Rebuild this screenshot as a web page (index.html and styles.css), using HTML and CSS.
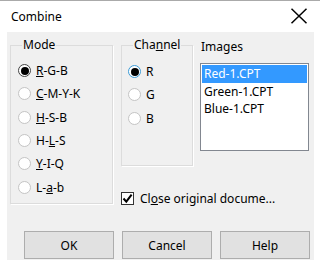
FILE: index.html
```html
<!DOCTYPE html>
<html lang="en">
<head>
    <meta charset="UTF-8">
    <title>Combine</title>
    <link rel="stylesheet" href="styles.css">
</head>
<body>
    <div class="window">
        <div class="titlebar">
            <span class="title">Combine</span>
            <svg class="close" width="18" height="16" viewBox="0 0 18 16">
                <path d="M1.5 0.8 L16.5 15.2 M16.5 0.8 L1.5 15.2" stroke="#000" stroke-width="1.5" fill="none"/>
            </svg>
        </div>
        <div class="client">
            <div class="top">
                <fieldset class="group mode">
                    <legend>Mode</legend>
                    <label class="option"><span class="radio checked"></span><span><u>R</u>-G-B</span></label>
                    <label class="option"><span class="radio"></span><span><u>C</u>-M-Y-K</span></label>
                    <label class="option"><span class="radio"></span><span><u>H</u>-S-B</span></label>
                    <label class="option"><span class="radio"></span><span>H-<u>L</u>-S</span></label>
                    <label class="option"><span class="radio"></span><span><u>Y</u>-I-Q</span></label>
                    <label class="option"><span class="radio"></span><span>L-<u>a</u>-b</span></label>
                </fieldset>
                <div class="middle">
                    <fieldset class="group channel">
                        <legend>Cha<u>n</u>nel</legend>
                        <label class="option"><span class="radio checked focus"></span><span>R</span></label>
                        <label class="option"><span class="radio"></span><span>G</span></label>
                        <label class="option"><span class="radio"></span><span>B</span></label>
                    </fieldset>
                    <label class="check">
                        <span class="box">
                            <svg width="11" height="11" viewBox="0 0 11 11">
                                <path d="M1.5 5.5 L4.3 8.6 L9.6 1.6" stroke="#000" stroke-width="2" fill="none"/>
                            </svg>
                        </span>
                        <span>Cl<u>o</u>se original docume...</span>
                    </label>
                </div>
                <div class="images">
                    <div class="images-label">Images</div>
                    <div class="listbox">
                        <div class="item selected">Red-1.CPT</div>
                        <div class="item">Green-1.CPT</div>
                        <div class="item">Blue-1.CPT</div>
                    </div>
                </div>
            </div>
            <div class="buttons">
                <button>OK</button>
                <button>Cancel</button>
                <button>Help</button>
            </div>
        </div>
    </div>
</body>
</html>
```

FILE: styles.css
```css
* {
    margin: 0;
    padding: 0;
    box-sizing: border-box;
    font-family: "Noto Sans", "Open Sans", sans-serif;
}

body {
    background: white;
    color: #000;
    font-size: 12px;
}

.window {
    width: 320px;
    height: 267px;
    border-top: 1px solid #aaa;
    display: flex;
    flex-direction: column;
}

.titlebar {
    height: 31px;
    display: flex;
    align-items: center;
    justify-content: space-between;
    padding: 0 12px 0 11px;
}

.title {
    font-size: 12px;
}

.close {
    display: block;
    margin-top: -1px;
}

.client {
    margin: 0 6px 0 7px;
    height: 228px;
    background: #f0f0f0;
    padding: 5px 0 0 3px;
}

.top {
    display: flex;
    height: 189px;
}

.group {
    border: 1px solid #dcdcdc;
    box-shadow: 1px 1px 0 #fff;
}

.group legend {
    padding: 0 1px;
    line-height: 16px;
}

.mode {
    width: 103px;
    height: 167px;
    padding: 6px 0 0 7px;
}

.mode legend {
    margin-left: 4px;
}

.middle {
    margin-left: 8px;
    width: 72px;
}

.channel {
    width: 72px;
    height: 129px;
    padding: 7px 0 0 6px;
}

.channel legend {
    margin-left: 5px;
}

.option {
    display: flex;
    align-items: center;
    height: 23.3px;
    gap: 5px;
    white-space: nowrap;
}

.radio {
    width: 13px;
    height: 13px;
    border-radius: 50%;
    border: 1px solid #c4c4c4;
    background: white;
    display: flex;
    align-items: center;
    justify-content: center;
    flex-shrink: 0;
}

.radio.checked {
    border-color: #444;
}

.radio.checked::after {
    content: "";
    width: 8px;
    height: 8px;
    border-radius: 50%;
    background: #000;
}

.radio.focus {
    border-color: #3c9bd6;
}

.check {
    display: flex;
    align-items: center;
    height: 16px;
    margin-top: 24px;
    gap: 6px;
    white-space: nowrap;
}

.box {
    width: 13px;
    height: 13px;
    border: 1px solid #333;
    background: white;
    display: flex;
    align-items: center;
    justify-content: center;
    flex-shrink: 0;
}

.box svg {
    display: block;
}

.images {
    margin-left: 7px;
    width: 109px;
}

.images-label {
    margin-top: 2px;
    padding-left: 1px;
    line-height: 16px;
}

.listbox {
    margin-top: 8px;
    height: 88px;
    border: 1px solid #828790;
    background: white;
    padding: 1px;
}

.item {
    height: 17.5px;
    line-height: 17.5px;
    padding-left: 2px;
}

.item.selected {
    background: #3399ff;
    color: white;
}

.buttons {
    display: flex;
    gap: 8px;
    margin: 5px 0 0 14px;
}

button {
    width: 90px;
    height: 28px;
    border: 1px solid #adadad;
    background: #e1e1e1;
    font-size: 12px;
    color: #000;
}
```
